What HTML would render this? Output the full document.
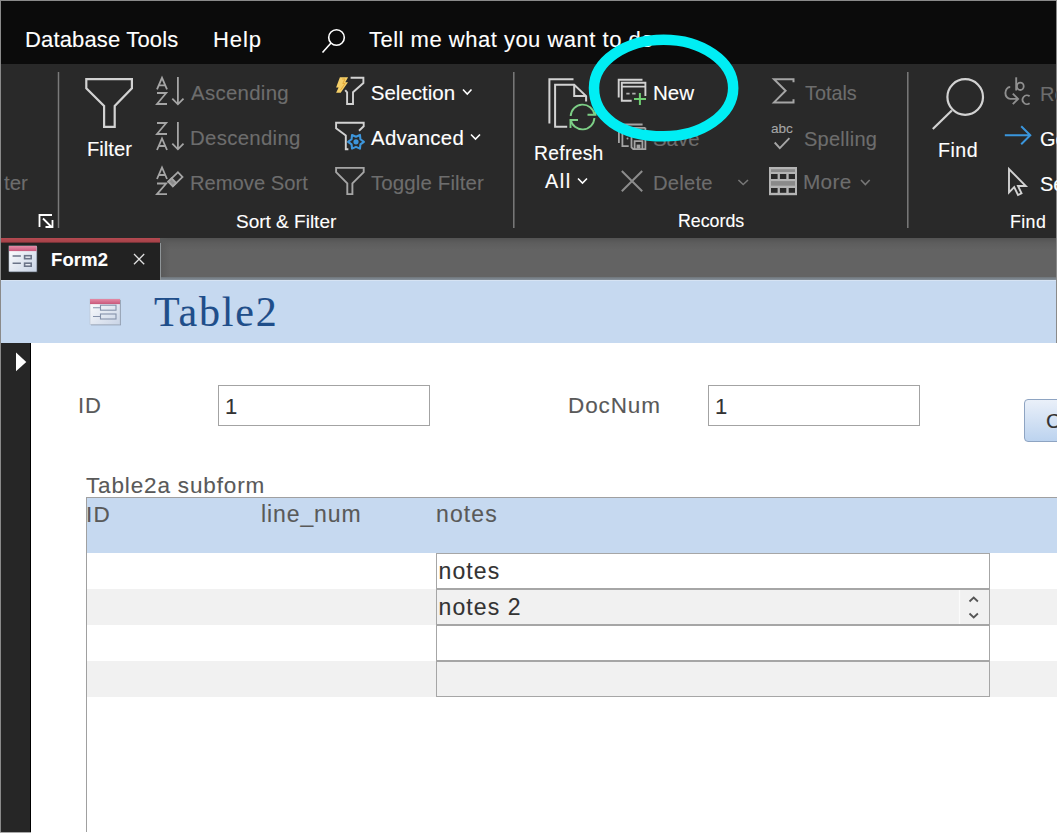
<!DOCTYPE html>
<html><head><meta charset="utf-8"><style>
html,body{margin:0;padding:0;width:1057px;height:833px;overflow:hidden;background:#fff}
.t{position:absolute;white-space:pre;line-height:1;-webkit-text-stroke:0.12px currentColor}
svg{position:absolute;left:0;top:0}
</style></head><body>
<div style="position:absolute;left:0px;top:0px;width:1057px;height:64px;background:#0b0b0b"></div>
<div style="position:absolute;left:0px;top:64px;width:1057px;height:174px;background:#292929"></div>
<div style="position:absolute;left:0px;top:238px;width:1057px;height:42px;background:linear-gradient(#535353,#5d5d5d 5px,#636363 12px,#636363 100%)"></div>
<div style="position:absolute;left:160px;top:277px;width:897px;height:3px;background:linear-gradient(#6e7479,#85909a)"></div>
<div style="position:absolute;left:0px;top:238px;width:160px;height:5px;background:linear-gradient(#b44a51,#a8434a 70%,#5a2a2e)"></div>
<div style="position:absolute;left:0px;top:243px;width:160px;height:37px;background:#222222"></div>
<div style="position:absolute;left:160px;top:238px;width:10px;height:39px;background:linear-gradient(90deg,#585858,rgba(99,99,99,0))"></div>
<div style="position:absolute;left:160px;top:243px;width:1px;height:37px;background:#8f9598"></div>
<div style="position:absolute;left:0px;top:280px;width:1057px;height:63px;background:#c6d9f0"></div>
<div style="position:absolute;left:0px;top:280px;width:1057px;height:1px;background:#d6e3f3"></div>
<div style="position:absolute;left:0px;top:343px;width:1057px;height:490px;background:#ffffff"></div>
<div style="position:absolute;left:0px;top:343px;width:31px;height:490px;background:#262626;border-right:1px solid #000;box-sizing:border-box"></div>
<div style="position:absolute;left:0px;top:0px;width:1057px;height:1px;background:#8a8a8a"></div>
<div style="position:absolute;left:0px;top:0px;width:1px;height:833px;background:#8a8a8a"></div>
<div style="position:absolute;left:1056px;top:0px;width:1px;height:343px;background:#8a8a8a"></div>
<div style="position:absolute;left:0px;top:832px;width:31px;height:1px;background:#a8a8a8"></div>
<div class="t" style="left:25.0px;top:28.9px;font-size:22px;color:#ffffff;font-weight:400;font-family:'Liberation Sans', sans-serif;letter-spacing:0.15px">Database Tools</div>
<div class="t" style="left:213.0px;top:28.9px;font-size:22px;color:#ffffff;font-weight:400;font-family:'Liberation Sans', sans-serif;letter-spacing:0.9px">Help</div>
<div class="t" style="left:369.0px;top:28.9px;font-size:22px;color:#ffffff;font-weight:400;font-family:'Liberation Sans', sans-serif;letter-spacing:0.5px">Tell me what you want to do</div>
<div class="t" style="left:87.0px;top:139.4px;font-size:20.2px;color:#ffffff;font-weight:400;font-family:'Liberation Sans', sans-serif;">Filter</div>
<div class="t" style="left:191.0px;top:83.1px;font-size:20.4px;color:#6d6d6d;font-weight:400;font-family:'Liberation Sans', sans-serif;letter-spacing:0.3px">Ascending</div>
<div class="t" style="left:190.0px;top:128.4px;font-size:20.4px;color:#6d6d6d;font-weight:400;font-family:'Liberation Sans', sans-serif;letter-spacing:0.3px">Descending</div>
<div class="t" style="left:190.0px;top:173.0px;font-size:20.2px;color:#6d6d6d;font-weight:400;font-family:'Liberation Sans', sans-serif;">Remove Sort</div>
<div class="t" style="left:236.0px;top:211.8px;font-size:19px;color:#ffffff;font-weight:400;font-family:'Liberation Sans', sans-serif;">Sort &amp; Filter</div>
<div class="t" style="left:370.8px;top:83.1px;font-size:20.5px;color:#ffffff;font-weight:400;font-family:'Liberation Sans', sans-serif;">Selection</div>
<div class="t" style="left:371.0px;top:128.4px;font-size:20.4px;color:#ffffff;font-weight:400;font-family:'Liberation Sans', sans-serif;letter-spacing:0.3px">Advanced</div>
<div class="t" style="left:371.0px;top:173.0px;font-size:20.5px;color:#6d6d6d;font-weight:400;font-family:'Liberation Sans', sans-serif;letter-spacing:0.1px">Toggle Filter</div>
<div class="t" style="left:4.0px;top:172.8px;font-size:20.5px;color:#6d6d6d;font-weight:400;font-family:'Liberation Sans', sans-serif;">ter</div>
<div class="t" style="left:534.0px;top:143.8px;font-size:19.3px;color:#ffffff;font-weight:400;font-family:'Liberation Sans', sans-serif;letter-spacing:0.3px">Refresh</div>
<div class="t" style="left:545.0px;top:171.7px;font-size:19.8px;color:#ffffff;font-weight:400;font-family:'Liberation Sans', sans-serif;letter-spacing:1.6px">All</div>
<div class="t" style="left:653.0px;top:82.7px;font-size:20.6px;color:#ffffff;font-weight:400;font-family:'Liberation Sans', sans-serif;">New</div>
<div class="t" style="left:653.0px;top:128.6px;font-size:20.4px;color:#6d6d6d;font-weight:400;font-family:'Liberation Sans', sans-serif;">Save</div>
<div class="t" style="left:653.0px;top:173.0px;font-size:20.3px;color:#6d6d6d;font-weight:400;font-family:'Liberation Sans', sans-serif;letter-spacing:0.2px">Delete</div>
<div class="t" style="left:678.0px;top:213.4px;font-size:17.8px;color:#ffffff;font-weight:400;font-family:'Liberation Sans', sans-serif;">Records</div>
<div class="t" style="left:805.0px;top:83.8px;font-size:19.8px;color:#6d6d6d;font-weight:400;font-family:'Liberation Sans', sans-serif;">Totals</div>
<div class="t" style="left:804.0px;top:128.8px;font-size:20px;color:#6d6d6d;font-weight:400;font-family:'Liberation Sans', sans-serif;letter-spacing:0.25px">Spelling</div>
<div class="t" style="left:803.0px;top:172.3px;font-size:20.8px;color:#6d6d6d;font-weight:400;font-family:'Liberation Sans', sans-serif;letter-spacing:0.3px">More</div>
<div class="t" style="left:938.0px;top:141.1px;font-size:19.6px;color:#ffffff;font-weight:400;font-family:'Liberation Sans', sans-serif;letter-spacing:0.5px">Find</div>
<div class="t" style="left:1010.0px;top:213.7px;font-size:17.8px;color:#ffffff;font-weight:400;font-family:'Liberation Sans', sans-serif;letter-spacing:0.4px">Find</div>
<div class="t" style="left:1040.0px;top:84.0px;font-size:20px;color:#6d6d6d;font-weight:400;font-family:'Liberation Sans', sans-serif;">Replace</div>
<div class="t" style="left:1040.0px;top:128.8px;font-size:20px;color:#ffffff;font-weight:400;font-family:'Liberation Sans', sans-serif;">Go To</div>
<div class="t" style="left:1040.0px;top:174.0px;font-size:20px;color:#ffffff;font-weight:400;font-family:'Liberation Sans', sans-serif;">Select</div>
<div class="t" style="left:51.0px;top:251.1px;font-size:18.4px;color:#ffffff;font-weight:700;font-family:'Liberation Sans', sans-serif;letter-spacing:0.2px">Form2</div>
<div class="t" style="left:154.0px;top:290.9px;font-size:42px;color:#1f4e8a;font-weight:400;font-family:'Liberation Serif', serif;letter-spacing:1.8px">Table2</div>
<div class="t" style="left:78.0px;top:395.3px;font-size:22px;color:#595959;font-weight:400;font-family:'Liberation Sans', sans-serif;letter-spacing:1px">ID</div>
<div class="t" style="left:568.0px;top:394.9px;font-size:22.5px;color:#595959;font-weight:400;font-family:'Liberation Sans', sans-serif;letter-spacing:0.9px">DocNum</div>
<div style="position:absolute;left:218px;top:385px;width:212px;height:41px;background:#fff;border:1px solid #a3a3a3;box-sizing:border-box"></div>
<div style="position:absolute;left:708px;top:385px;width:212px;height:41px;background:#fff;border:1px solid #a3a3a3;box-sizing:border-box"></div>
<div class="t" style="left:225.0px;top:396.1px;font-size:22px;color:#333333;font-weight:400;font-family:'Liberation Sans', sans-serif;">1</div>
<div class="t" style="left:715.0px;top:396.1px;font-size:22px;color:#333333;font-weight:400;font-family:'Liberation Sans', sans-serif;">1</div>
<div style="position:absolute;left:1024px;top:399px;width:40px;height:43px;border:1px solid #8ea4c2;border-radius:4px;box-sizing:border-box;background:linear-gradient(#eaf0f9,#bcd3ef)"></div>
<div class="t" style="left:1046.0px;top:409.7px;font-size:21px;color:#333333;font-weight:400;font-family:'Liberation Sans', sans-serif;">C</div>
<div class="t" style="left:86.0px;top:474.9px;font-size:22.5px;color:#595959;font-weight:400;font-family:'Liberation Sans', sans-serif;letter-spacing:0.85px">Table2a subform</div>
<div style="position:absolute;left:86px;top:497px;width:971px;height:1px;background:#a0a0a0"></div>
<div style="position:absolute;left:86px;top:497px;width:1px;height:335px;background:#a0a0a0"></div>
<div style="position:absolute;left:87px;top:498px;width:970px;height:55px;background:#c6d9f0"></div>
<div class="t" style="left:86.0px;top:503.7px;font-size:22.5px;color:#595959;font-weight:400;font-family:'Liberation Sans', sans-serif;letter-spacing:1.2px">ID</div>
<div class="t" style="left:261.0px;top:503.4px;font-size:23px;color:#595959;font-weight:400;font-family:'Liberation Sans', sans-serif;letter-spacing:0.9px">line_num</div>
<div class="t" style="left:436.0px;top:503.4px;font-size:23px;color:#595959;font-weight:400;font-family:'Liberation Sans', sans-serif;letter-spacing:1.1px">notes</div>
<div style="position:absolute;left:87px;top:589px;width:970px;height:36px;background:#f1f1f1"></div>
<div style="position:absolute;left:87px;top:661px;width:970px;height:36px;background:#f1f1f1"></div>
<div style="position:absolute;left:436px;top:553px;width:554px;height:36px;border:1px solid #a6a6a6;box-sizing:border-box"></div>
<div style="position:absolute;left:436px;top:589px;width:554px;height:36px;border:1px solid #a6a6a6;box-sizing:border-box"></div>
<div style="position:absolute;left:436px;top:625px;width:554px;height:36px;border:1px solid #a6a6a6;box-sizing:border-box"></div>
<div style="position:absolute;left:436px;top:661px;width:554px;height:36px;border:1px solid #a6a6a6;box-sizing:border-box"></div>
<div class="t" style="left:438.5px;top:560.1px;font-size:23px;color:#333333;font-weight:400;font-family:'Liberation Sans', sans-serif;letter-spacing:1.1px">notes</div>
<div class="t" style="left:438.5px;top:595.6px;font-size:23px;color:#333333;font-weight:400;font-family:'Liberation Sans', sans-serif;letter-spacing:1.1px">notes 2</div>
<div class="t" style="left:771.0px;top:122.3px;font-size:13.6px;color:#a5a5a5;font-weight:400;font-family:'Liberation Sans', sans-serif;letter-spacing:0px">abc</div>
<svg width="1057" height="833" viewBox="0 0 1057 833">
<circle cx="336.5" cy="37.5" r="7.8" fill="none" stroke="#fff" stroke-width="1.6"/>
<line x1="331" y1="43" x2="322.5" y2="52.5" stroke="#fff" stroke-width="1.6"/>
<path d="M86.3,79.2 H131.9 V88.2 L114.7,105.9 V126.8 H104.1 V105.9 L86.3,88.2 Z" fill="none" stroke="#d2d2d2" stroke-width="2.2" stroke-linejoin="miter"/>
<path d="M157,89.3 L162,77.8 L167,89.3 M158.8,85.3 H165.2" fill="none" stroke="#a5a5a5" stroke-width="1.8"/>
<path d="M157,93 H166.2 L157,104 H167" fill="none" stroke="#a5a5a5" stroke-width="1.8"/>
<path d="M177.9,77 V104 M172.3,98.7 L177.9,104.3 L183.5,98.7" fill="none" stroke="#a5a5a5" stroke-width="1.8"/>
<path d="M157,123 H166.2 L157,134 H167" fill="none" stroke="#a5a5a5" stroke-width="1.8"/>
<path d="M157,150 L162,138.5 L167,150 M158.8,146 H165.2" fill="none" stroke="#a5a5a5" stroke-width="1.8"/>
<path d="M177.9,122 V149 M172.3,143.7 L177.9,149.3 L183.5,143.7" fill="none" stroke="#a5a5a5" stroke-width="1.8"/>
<path d="M157,179 L162,167.5 L167,179 M158.8,175 H165.2" fill="none" stroke="#a5a5a5" stroke-width="1.8"/>
<path d="M157,183.5 H166.2 L157,194.2 H167" fill="none" stroke="#a5a5a5" stroke-width="1.8"/>
<g transform="translate(175.4,179.2) rotate(-44)"><rect x="-6.7" y="-3.3" width="13.4" height="6.6" fill="none" stroke="#a5a5a5" stroke-width="1.8"/><rect x="-6.7" y="-3.3" width="4.6" height="6.6" fill="#8a8a8a" stroke="#a5a5a5" stroke-width="1.8"/></g>
<path d="M350.6,77.7 H363.4 V83 L353,92.2 V104 H347.1 V92.4 L345.2,90.1" fill="none" stroke="#d2d2d2" stroke-width="1.9"/>
<path d="M339.9,77.3 L348.1,77.3 L345.3,82.3 L348,82.3 L340.7,92.8 L336.1,92.8 L338.6,87.6 L336.1,87.6 Z" fill="#f5cf68"/>
<path d="M342.2,79 L345,79 L342.8,83.5 L345,83.5 L340.5,90" fill="none" stroke="#e3a93a" stroke-width="1"/>
<path d="M359,130.8 L363.7,126.3 V122.7 H336.1 V128.3 L345.8,135.4 V149.2 H348.4" fill="none" stroke="#d2d2d2" stroke-width="1.9"/>
<polygon points="363.90,141.80 360.42,144.35 359.95,148.64 356.00,146.90 352.05,148.64 351.58,144.35 348.10,141.80 351.58,139.25 352.05,134.96 356.00,136.70 359.95,134.96 360.42,139.25" fill="none" stroke="#3d96dc" stroke-width="2.1" stroke-linejoin="round"/>
<circle cx="356" cy="141.8" r="2.6" fill="#3d96dc"/>
<path d="M336.1,167.9 H363.7 V172.1 L352.4,183.4 V194.1 H347.3 V183.4 L336.1,172.1 Z" fill="none" stroke="#a5a5a5" stroke-width="1.9"/>
<line x1="58.5" y1="72" x2="58.5" y2="228" stroke="#7a7a7a" stroke-width="1.5"/>
<line x1="513.8" y1="72" x2="513.8" y2="228" stroke="#7a7a7a" stroke-width="1.5"/>
<line x1="907.8" y1="72" x2="907.8" y2="228" stroke="#7a7a7a" stroke-width="1.5"/>
<path d="M39.5,227 V215 H52" fill="none" stroke="#fff" stroke-width="1.8"/>
<path d="M43,218.5 L51.5,227 M45.5,227 H52.5 V220" fill="none" stroke="#fff" stroke-width="1.8"/>
<path d="M463,89.5 L467.25,94 L471.5,89.5" fill="none" stroke="#fff" stroke-width="1.6"/>
<path d="M471,134.5 L475.5,139 L480,134.5" fill="none" stroke="#fff" stroke-width="1.6"/>
<path d="M578,178.5 L582.5,183 L587,178.5" fill="none" stroke="#fff" stroke-width="1.6"/>
<path d="M738.4,180 L743.2,184.5 L748,180" fill="none" stroke="#777" stroke-width="1.6"/>
<path d="M861,180 L865.35,184.5 L869.7,180" fill="none" stroke="#777" stroke-width="1.6"/>
<path d="M573.5,79.2 H549.4 V123.5" fill="none" stroke="#d2d2d2" stroke-width="2"/>
<path d="M567.2,126.8 H555.1 V84.8 H574.2 L586.1,96.1 V101.5 M574.2,84.8 V96.1 H586.1" fill="none" stroke="#d2d2d2" stroke-width="2"/>
<path d="M570.7,116 A12,12 0 0 1 594.5,114.5" fill="none" stroke="#7dcf86" stroke-width="1.9"/>
<path d="M587.5,114.7 H595.5 V107" fill="none" stroke="#7dcf86" stroke-width="1.9"/>
<path d="M594.4,118 A12,12 0 0 1 570.6,119.5" fill="none" stroke="#7dcf86" stroke-width="1.9"/>
<path d="M578,120 H570.5 V128" fill="none" stroke="#7dcf86" stroke-width="1.9"/>
<path d="M642.5,79.7 H618.7 V97.5" fill="none" stroke="#d2d2d2" stroke-width="1.9"/>
<path d="M631.7,100.8 H621.8 V82.8 H645.4 V96 M621.8,86.6 H645.4" fill="none" stroke="#d2d2d2" stroke-width="1.9"/>
<path d="M626.3,93.6 H629.6 M632.2,93.6 H635.6" stroke="#b0b0b0" stroke-width="1.6"/>
<path d="M634,98.9 H646 M639.9,93 V105" stroke="#6fcf73" stroke-width="2"/>
<path d="M642.6,124.5 H618.9 V142.9" fill="none" stroke="#a5a5a5" stroke-width="1.8"/>
<path d="M645.4,127.8 H622.4 V146.1 H628.7" fill="none" stroke="#a5a5a5" stroke-width="1.8"/>
<path d="M631.5,136 V147.3 L633.3,149.2 H645.4 V127.8 M634.6,149.2 V141.2 H642.4 V149.2" fill="none" stroke="#a5a5a5" stroke-width="1.8"/>
<rect x="636.6" y="144.6" width="3.8" height="4" fill="#a5a5a5"/>
<circle cx="627.5" cy="138.6" r="1" fill="#a5a5a5"/>
<path d="M621.8,171 L642.2,191.3 M642.2,171 L621.8,191.3" stroke="#8c8c8c" stroke-width="2"/>
<path d="M793.5,82.3 V79.2 H774 L785.6,90.8 L774,102.4 H793.5 V99.2" fill="none" stroke="#a5a5a5" stroke-width="2"/>
<path d="M774.7,142.5 L779.8,148.2 L789.4,138.2" fill="none" stroke="#a5a5a5" stroke-width="1.9"/>
<rect x="769" y="167" width="28" height="28.2" fill="#b4b4b4"/>
<rect x="771" y="169.2" width="24" height="2.8" fill="#8a8a8a"/>
<rect x="771" y="181.1" width="24" height="4.6" fill="#8a8a8a"/>
<rect x="771" y="174" width="6.6" height="5" fill="#292929"/>
<rect x="771" y="188" width="6.6" height="4.8" fill="#292929"/>
<rect x="779.9" y="174" width="6.4" height="5" fill="#292929"/>
<rect x="779.9" y="188" width="6.4" height="4.8" fill="#292929"/>
<rect x="788.7" y="174" width="6.3" height="5" fill="#292929"/>
<rect x="788.7" y="188" width="6.3" height="4.8" fill="#292929"/>
<circle cx="965.2" cy="97" r="17.8" fill="none" stroke="#d2d2d2" stroke-width="2.2"/>
<line x1="951.8" y1="110.5" x2="932.8" y2="129" stroke="#d2d2d2" stroke-width="2.2"/>
<path d="M1016.2,77.3 V90.5" stroke="#8f8f8f" stroke-width="1.9"/>
<ellipse cx="1020.3" cy="86.3" rx="3.4" ry="3.7" fill="none" stroke="#8f8f8f" stroke-width="1.8"/>
<path d="M1029.6,96.3 A4.3,4.4 0 1 0 1029.6,103.2" fill="none" stroke="#8f8f8f" stroke-width="1.8"/>
<path d="M1010.2,87 A4.8,5.95 0 0 0 1010.2,98.9 H1018 M1012.8,93.6 L1018.1,98.9 L1012.8,104.2" fill="none" stroke="#8f8f8f" stroke-width="1.9"/>
<path d="M1004.8,135.3 H1030 M1021.2,126.2 L1030.3,135.3 L1021.2,144.3" fill="none" stroke="#3a96dd" stroke-width="2"/>
<path d="M1009,169 V192.5 L1014.2,187.2 L1018,195 L1021.5,193.3 L1018,186 H1025.8 Z" fill="none" stroke="#d2d2d2" stroke-width="1.9" stroke-linejoin="miter"/>
<path d="M134,254 L144.2,264.2 M144.2,254 L134,264.2" stroke="#e0e0e0" stroke-width="1.3"/>
<defs><linearGradient id="fg9" x1="0" y1="0" x2="1" y2="1"><stop offset="0" stop-color="#ffffff"/><stop offset="1" stop-color="#c9d4e6"/></linearGradient><linearGradient id="pk9" x1="0" y1="0" x2="0" y2="1"><stop offset="0" stop-color="#e58aa6"/><stop offset="1" stop-color="#c8587a"/></linearGradient></defs>
<rect x="10" y="247" width="27.5" height="25.5" fill="#55606e" opacity="0.5"/>
<rect x="9" y="246" width="27.5" height="25.5" fill="url(#fg9)" stroke="#b8c2d0" stroke-width="0.6"/>
<rect x="9" y="246" width="27.5" height="5.1" fill="url(#pk9)"/>
<path d="M12.6,256 H20.9 M12.6,263.2 H20.9" stroke="#6b7488" stroke-width="1.6"/>
<rect x="24.6" y="255.7" width="6.6" height="3" fill="#e8ecf4" stroke="#6b7488" stroke-width="1.6"/><rect x="24.6" y="263.2" width="6.6" height="3" fill="#e8ecf4" stroke="#6b7488" stroke-width="1.6"/>
<defs><linearGradient id="fg90" x1="0" y1="0" x2="1" y2="1"><stop offset="0" stop-color="#ffffff"/><stop offset="1" stop-color="#c9d4e6"/></linearGradient><linearGradient id="pk90" x1="0" y1="0" x2="0" y2="1"><stop offset="0" stop-color="#e58aa6"/><stop offset="1" stop-color="#c8587a"/></linearGradient></defs>
<rect x="91" y="300" width="30" height="25.3" fill="#55606e" opacity="0.5"/>
<rect x="90" y="299" width="30" height="25.3" fill="url(#fg90)" stroke="#b8c2d0" stroke-width="0.6"/>
<rect x="90" y="299" width="30" height="5.1" fill="url(#pk90)"/>
<path d="M93,307.8 H101 M93,316.5 H101" stroke="#8592aa" stroke-width="1.1"/>
<rect x="100.5" y="305.2" width="15.5" height="5" fill="none" stroke="#8592aa" stroke-width="1.1"/><rect x="100.5" y="314" width="15.5" height="5" fill="none" stroke="#8592aa" stroke-width="1.1"/>
<path d="M16,352.6 L26.3,362 L16,371.3 Z" fill="#ffffff"/>
<line x1="959.5" y1="590" x2="959.5" y2="624" stroke="#fbfbfb" stroke-width="1.2"/>
<path d="M969.5,601.5 L973.7,597.5 L977.9,601.5 M969.5,613.5 L973.7,617.5 L977.9,613.5" fill="none" stroke="#555" stroke-width="1.8"/>
<path d="M663.6,39.7 C702.04008,39.7 733.2,61.32391 733.2,88 C733.2,114.67609 702.04008,136.3 663.6,136.3 C619.75,136.3 594.0,116.01 594.0,88 C594.0,61.32 625.16,39.7 663.6,39.7 Z" fill="none" stroke="#00eef4" stroke-width="10.5"/>
</svg>
</body></html>
